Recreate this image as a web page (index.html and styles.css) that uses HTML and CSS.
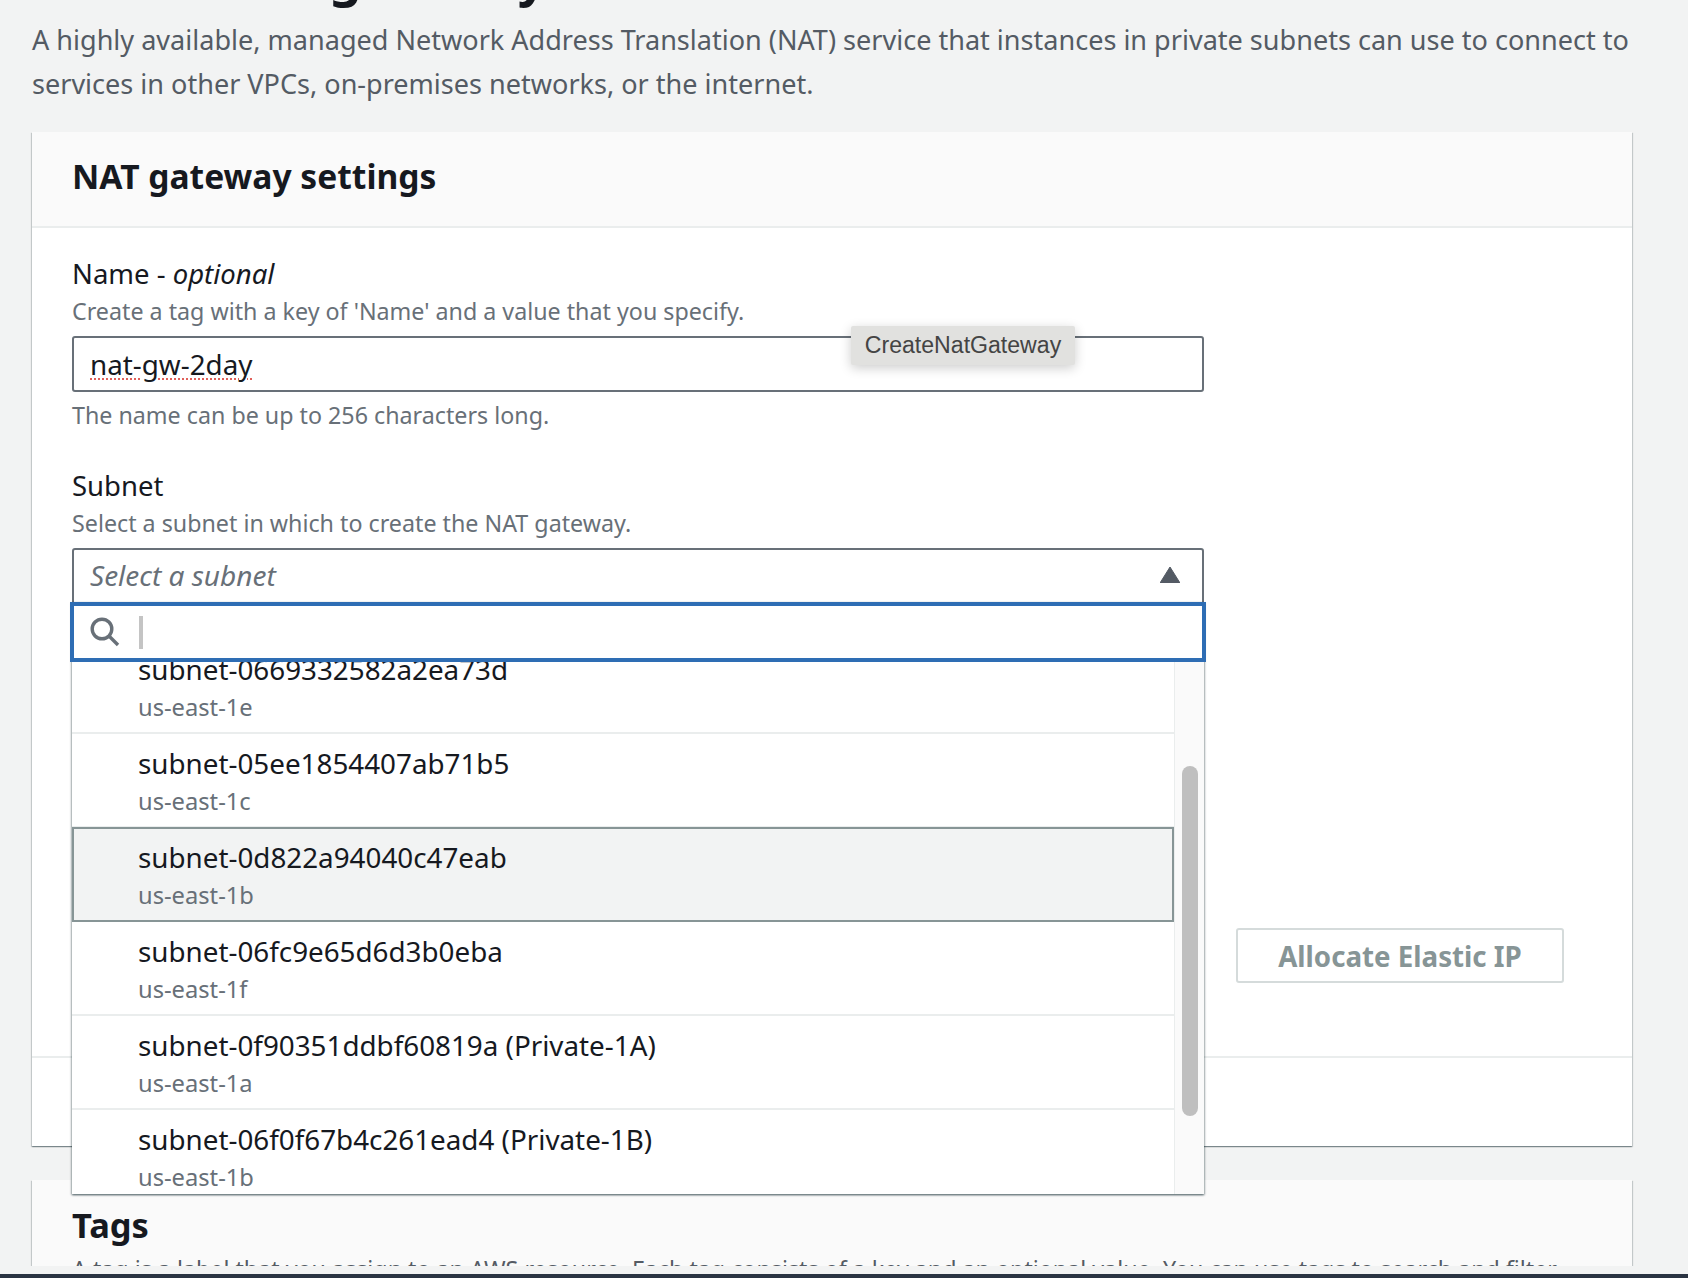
FILE: index.html
```html
<!DOCTYPE html>
<html lang="en">
<head>
    <meta charset="UTF-8">
    <title>Create NAT gateway</title>
    <link rel="stylesheet" href="styles.css">
</head>
<body>
    <div class="page">
        <main class="content">
            <h1 class="page-title">Create NAT gateway</h1>
            <p class="page-desc">A highly available, managed Network Address Translation (NAT) service that instances in private subnets can use to connect to services in other VPCs, on-premises networks, or the internet.</p>

            <section class="card">
                <header class="card-head">
                    <h2>NAT gateway settings</h2>
                </header>
                <div class="card-body">
                    <div class="field field-name">
                        <div class="label">Name - <em>optional</em></div>
                        <div class="desc">Create a tag with a key of 'Name' and a value that you specify.</div>
                        <div class="input"><span class="misspelt">nat-gw-2day</span></div>
                        <div class="tooltip">CreateNatGateway</div>
                        <div class="help">The name can be up to 256 characters long.</div>
                    </div>
                    <div class="field field-subnet">
                        <div class="label">Subnet</div>
                        <div class="desc">Select a subnet in which to create the NAT gateway.</div>
                        <div class="select">
                            <span class="placeholder">Select a subnet</span>
                            <svg class="caret" width="20" height="16" viewBox="0 0 20 16"><path d="M10 0 L20 16 H0 Z" fill="#545b64" stroke="#545b64" stroke-width="1" stroke-linejoin="round"/></svg>
                        </div>
                        <div class="dropdown">
                            <div class="search">
                                <svg width="30" height="30" viewBox="0 0 30 30" fill="none" stroke="#687078" stroke-width="3.4"><circle cx="12" cy="12" r="9.8"/><path d="M19 19 L28 28"/></svg>
                                <span class="cursor"></span>
                            </div>
                            <div class="list">
                                <div class="rows">
                                    <div class="row row-first"><div class="row-name">subnet-0669332582a2ea73d</div><div class="row-az">us-east-1e</div></div>
                                    <div class="row"><div class="row-name">subnet-05ee1854407ab71b5</div><div class="row-az">us-east-1c</div></div>
                                    <div class="row row-selected"><div class="row-name">subnet-0d822a94040c47eab</div><div class="row-az">us-east-1b</div></div>
                                    <div class="row"><div class="row-name">subnet-06fc9e65d6d3b0eba</div><div class="row-az">us-east-1f</div></div>
                                    <div class="row"><div class="row-name">subnet-0f90351ddbf60819a (Private-1A)</div><div class="row-az">us-east-1a</div></div>
                                    <div class="row"><div class="row-name">subnet-06f0f67b4c261ead4 (Private-1B)</div><div class="row-az">us-east-1b</div></div>
                                </div>
                                <div class="track"><div class="thumb"></div></div>
                            </div>
                        </div>
                        <div class="elastic-row">
                            <button class="btn-disabled" type="button">Allocate Elastic IP</button>
                        </div>
                    </div>
                </div>
                <div class="card-foot"></div>
            </section>

            <section class="card card-tags">
                <header class="tags-head">
                    <h2>Tags</h2>
                    <p>A tag is a label that you assign to an AWS resource. Each tag consists of a key and an optional value. You can use tags to search and filter your resources.</p>
                </header>
            </section>
        </main>
        <div class="bottom-bar"></div>
    </div>
</body>
</html>
```

FILE: styles.css
```css
html, body { margin: 0; padding: 0; }
body {
    font-family: "Noto Sans", "Open Sans", sans-serif;
    background-color: #f2f3f3;
    color: #16191f;
}
.page {
    height: 1278px;
    overflow: hidden;
    display: flex;
    flex-direction: column;
}
.content {
    height: 1266px;
    overflow: hidden;
    padding: 0 56px 0 32px;
    flex: none;
}
.bottom-bar {
    margin-top: 8px;
    height: 4px;
    background-color: #2a3442;
    flex: none;
}
.page-title {
    margin: -48px 0 0;
    font-size: 51px;
    line-height: 48px;
    font-weight: 700;
}
.page-desc {
    margin: 18px 0 0;
    font-size: 27.05px;
    line-height: 44px;
    color: #545b64;
    width: 1600px;
}

.card {
    margin-top: 26px;
    width: 1600px;
    background-color: #fff;
    box-shadow: 0 1px 1px 0 rgba(0, 28, 36, 0.3), 1px 1px 1px 0 rgba(0, 28, 36, 0.15), -1px 1px 1px 0 rgba(0, 28, 36, 0.15);
}
.card-head {
    height: 96px;
    box-sizing: border-box;
    background-color: #fafafa;
    border-bottom: 2px solid #eaeded;
    padding: 0 40px 6px;
    display: flex;
    align-items: center;
}
.card-head h2 {
    margin: 0;
    font-size: 33.6px;
    font-weight: 700;
}
.card-body {
    height: 830px;
    box-sizing: border-box;
    padding: 28px 40px 0;
    border-bottom: 2px solid #eaeded;
}
.card-foot { height: 88px; }

.field { position: relative; width: 1132px; }
.field-subnet { margin-top: 35px; }
.label { font-size: 27.5px; line-height: 36px; }
.label em { font-style: italic; }
.desc { font-size: 23.25px; line-height: 36px; color: #687078; margin-top: 1px; }
.help { font-size: 23.25px; line-height: 36px; color: #687078; margin-top: 5px; }

.input, .select {
    box-sizing: border-box;
    border: 2px solid #687078;
    border-radius: 3px;
    background-color: #fff;
    padding: 0 16px;
    display: flex;
    align-items: center;
    font-size: 27.8px;
}
.input { margin-top: 7px; height: 56px; }
.select {
    margin-top: 7px;
    height: 58px;
    padding-bottom: 4px;
    justify-content: space-between;
}
.misspelt { text-decoration: underline dotted #e0605a 2px; text-underline-offset: 3px; }
.placeholder { font-style: italic; color: #687078; font-size: 28px; }
.caret { margin-right: 6px; }

/* sits over the name input */
.tooltip {
    position: absolute;
    left: 779px;
    top: 70px;
    width: 224px;
    height: 39px;
    box-sizing: border-box;
    background-color: #e1e1df;
    border-radius: 2px;
    color: #444;
    font-family: "Liberation Sans", sans-serif;
    font-size: 23.1px;
    line-height: 39px;
    text-align: center;
    box-shadow: 0 3px 12px rgba(0, 0, 0, 0.2);
}

/* open list lies over the rest of the card */
.dropdown {
    position: absolute;
    left: 0;
    top: 134px;
    width: 1132px;
    z-index: 2;
    background-color: #fff;
    box-shadow: 0 1px 2px rgba(0, 28, 36, 0.5), 1px 1px 2px rgba(0, 28, 36, 0.2), -1px 1px 2px rgba(0, 28, 36, 0.2);
}
.search {
    height: 60px;
    box-sizing: border-box;
    margin: 0 -2px;
    border: 4px solid #2e6db4;
    background-color: #fff;
    display: flex;
    align-items: center;
    padding-left: 16px;
    position: relative;
    z-index: 1;
}
.cursor {
    width: 4px;
    height: 33px;
    margin-left: 19px;
    background-color: #c4c4c4;
}
.list {
    height: 532px;
    overflow: hidden;
    display: flex;
}
.rows { width: 1102px; flex: none; border-right: 1px solid #eaeded; }
.track {
    flex: 1;
    position: relative;
    background-color: #fafafa;
}
.thumb {
    position: absolute;
    left: 7px;
    top: 104px;
    width: 16px;
    height: 350px;
    border-radius: 8px;
    background-color: #bfbfbf;
}
.row {
    height: 94px;
    box-sizing: border-box;
    padding: 11px 0 0 66px;
    border-bottom: 2px solid #eaeded;
}
.row-first { margin-top: -22px; }
.row-selected {
    height: 95px;
    background-color: #f2f3f3;
    border: 2px solid #879596;
    padding-top: 10px;
    margin-top: -1px;
    padding-left: 64px;
}
.row-name { font-size: 27.8px; line-height: 36px; }
.row-az { font-size: 23.7px; line-height: 32px; color: #687078; margin-top: 4px; }

.elastic-row {
    position: absolute;
    top: 460px;
    left: 1164px;
}
.btn-disabled {
    width: 328px;
    height: 55px;
    box-sizing: border-box;
    background-color: #fff;
    border: 2px solid #d5dbdb;
    border-radius: 3px;
    color: #879596;
    font-family: inherit;
    font-size: 27.7px;
    font-weight: 700;
}

.card-tags {
    margin-top: 34px;
    height: 200px;
    background-color: #fafafa;
}
.tags-head { padding: 23px 40px 0; }
.tags-head h2 { margin: 0; font-size: 34.5px; line-height: 44px; }
.tags-head p {
    margin: 4px 0 0;
    font-size: 23.25px;
    line-height: 36px;
    color: #545b64;
    width: 1520px;
}
```
